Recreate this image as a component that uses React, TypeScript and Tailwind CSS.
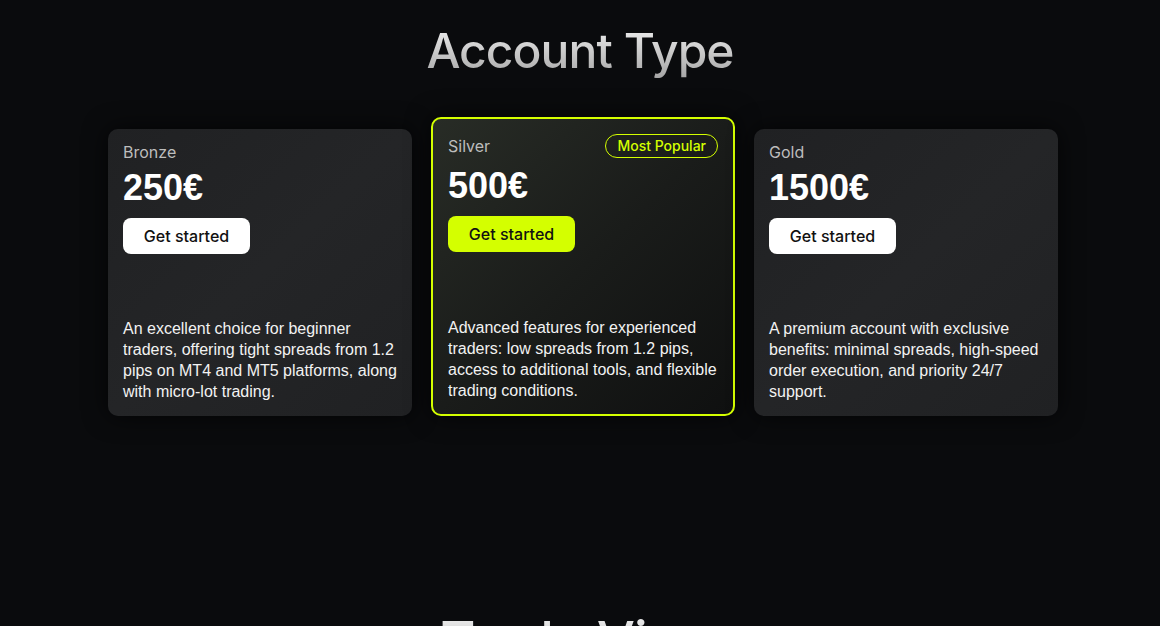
import React from "react";

type Plan = {
  name: string;
  price: string;
  text: string;
  popular?: boolean;
};

const plans: Plan[] = [
  {
    name: "Bronze",
    price: "250€",
    text: "An excellent choice for beginner traders, offering tight spreads from 1.2 pips on MT4 and MT5 platforms, along with micro-lot trading.",
  },
  {
    name: "Silver",
    price: "500€",
    popular: true,
    text: "Advanced features for experienced traders: low spreads from 1.2 pips, access to additional tools, and flexible trading conditions.",
  },
  {
    name: "Gold",
    price: "1500€",
    text: "A premium account with exclusive benefits: minimal spreads, high-speed order execution, and priority 24/7 support.",
  },
];

function PlanCard({ plan }: { plan: Plan }) {
  if (plan.popular) {
    return (
      <div className="w-[304px] h-[299px] flex flex-col rounded-[10px] border-2 border-[#d4ff00] bg-gradient-to-br from-[#282c26] via-[#1a1c1a] to-[#0f1010] px-[15px] pt-[15px] pb-[13px] shadow-[0_0_24px_rgba(0,0,0,0.7)]">
        <div className="flex h-6 items-center justify-between">
          <span className="text-base leading-4 text-[#bdbdbd] font-['Inter',sans-serif]">{plan.name}</span>
          <span className="flex h-6 items-center rounded-full border border-[#d4ff00] px-[11px] text-sm font-medium text-[#d4ff00] font-['Inter',sans-serif]">
            Most Popular
          </span>
        </div>
        <div className="mt-2 text-[36px] leading-[40px] font-bold text-white font-['Liberation_Sans',Arial,sans-serif]">
          {plan.price}
        </div>
        <button className="mt-2.5 h-9 w-[127px] rounded-lg bg-[#d4ff00] text-base font-medium text-[#111] font-['Inter',sans-serif]">
          Get started
        </button>
        <p className="mt-auto text-base leading-[21px] text-[#f2f2f2] font-['Liberation_Sans',Arial,sans-serif]">
          {plan.text}
        </p>
      </div>
    );
  }
  return (
    <div className="w-[304px] h-[287px] flex flex-col rounded-[10px] bg-gradient-to-br from-[#202123] via-[#242527] to-[#202123] px-[15px] pt-[15px] pb-[14px] shadow-[0_0_24px_rgba(0,0,0,0.7)]">
      <span className="text-base leading-4 text-[#bdbdbd] font-['Inter',sans-serif]">{plan.name}</span>
      <div className="mt-2 text-[36px] leading-[40px] font-bold text-white font-['Liberation_Sans',Arial,sans-serif]">
        {plan.price}
      </div>
      <button className="mt-2.5 h-9 w-[127px] rounded-lg bg-white text-base font-medium text-[#111] font-['Inter',sans-serif]">
        Get started
      </button>
      <p className="mt-auto text-base leading-[21px] text-[#f2f2f2] font-['Liberation_Sans',Arial,sans-serif]">
        {plan.text}
      </p>
    </div>
  );
}

export default function App() {
  return (
    <div className="h-screen bg-[#0a0b0d] overflow-hidden">
      {/* Account type */}
      <section className="pt-[21px]">
        <h2 className="text-center text-[48px] leading-[60px] font-medium tracking-[-0.02em] font-['Inter',sans-serif] bg-gradient-to-b from-[#f6f6f6] to-[#a2a2a2] bg-clip-text text-transparent">
          Account Type
        </h2>
        <div className="mt-[36px] flex items-end justify-center gap-[19px] pl-[6px]">
          {plans.map((p) => (
            <PlanCard key={p.name} plan={p} />
          ))}
        </div>
      </section>

      {/* next section */}
      <section className="mt-[195px]">
        <h2 className="text-center text-[54px] leading-[60px] font-medium tracking-[-0.02em] font-['Inter',sans-serif] bg-gradient-to-b from-[#f6f6f6] to-[#a2a2a2] bg-clip-text text-transparent">
          Trade View
        </h2>
      </section>
    </div>
  );
}
